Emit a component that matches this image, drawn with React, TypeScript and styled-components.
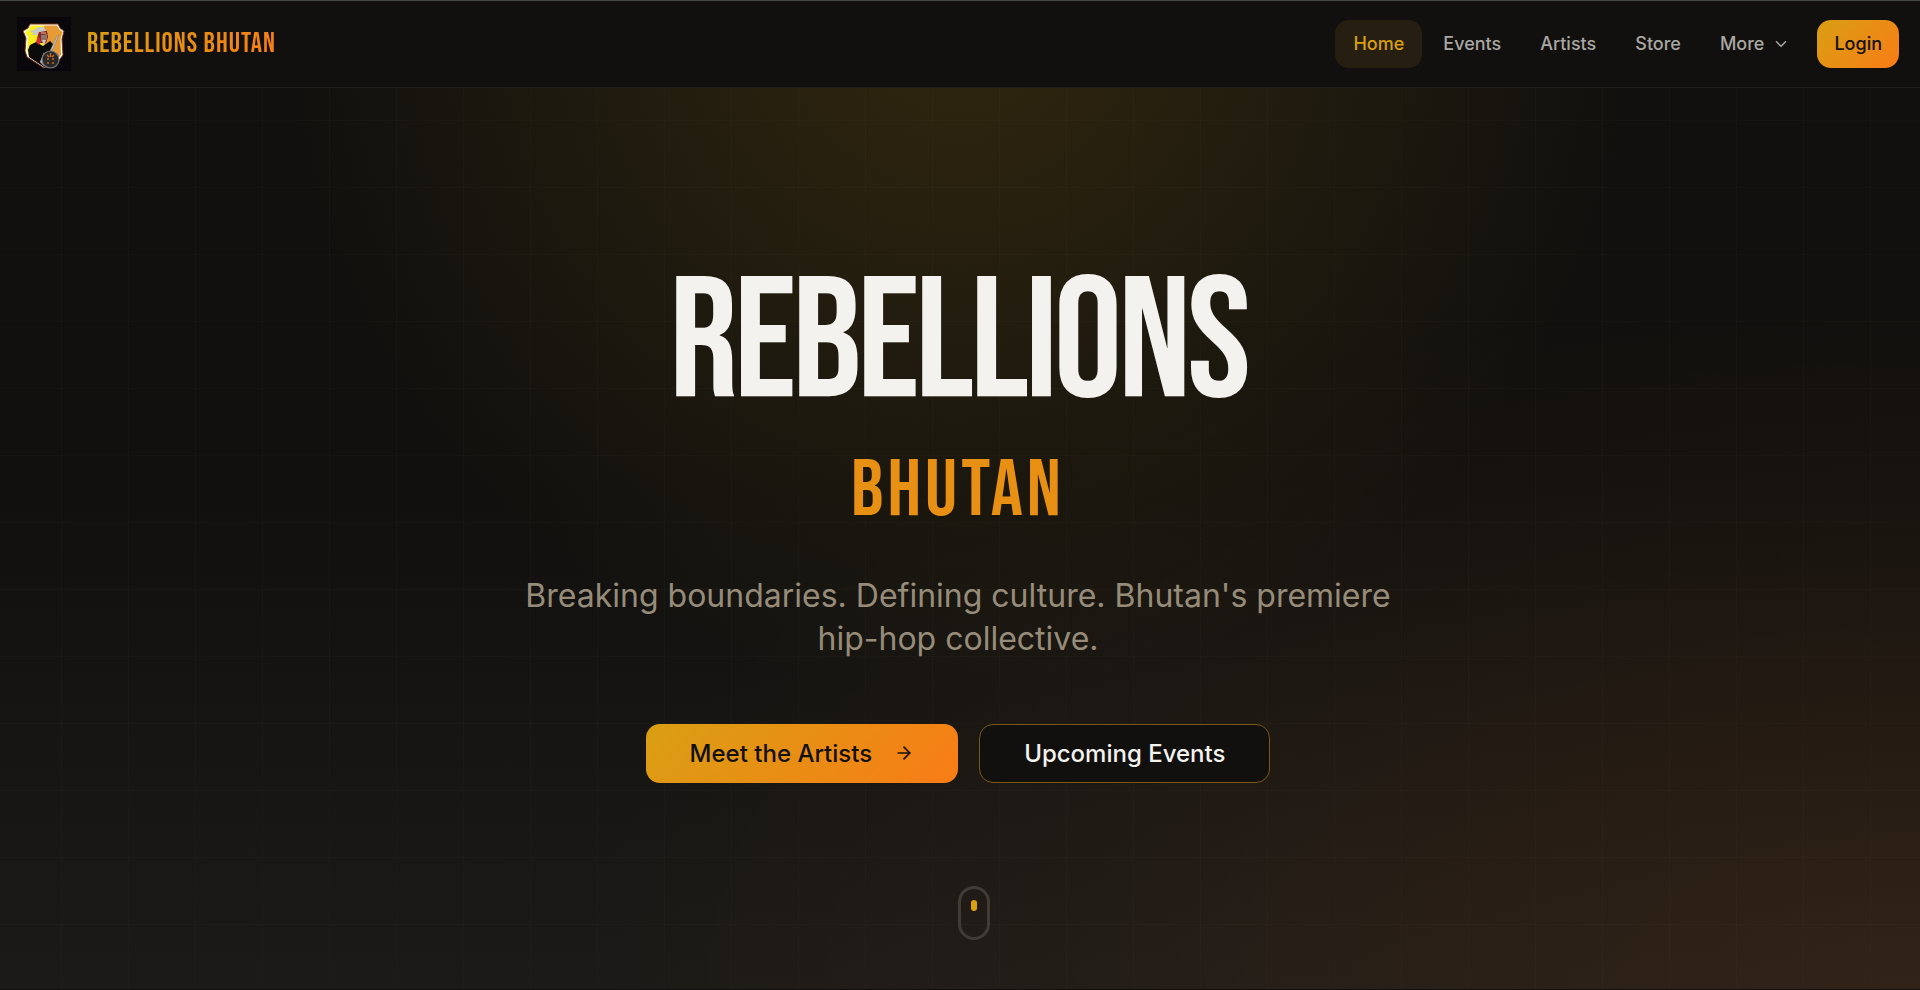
import React from "react";
import styled, { createGlobalStyle, css } from "styled-components";
import { ArrowRight, ChevronDown } from "lucide-react";

const color = {
  ink: "#11100e",
  gold: "#d99f13",
  text: "#f4f2ee",
  muted: "#968c79",
  nav: "#a9a7a3",
};
const brandGradient = "linear-gradient(135deg, #d99f13, #f97c16)";
const display = `"Bebas Neue", "Liberation Sans Narrow", "Liberation Sans", sans-serif`;

const GlobalStyle = createGlobalStyle`
  * { box-sizing: border-box; }
  body {
    margin: 0;
    background: ${color.ink};
    color: ${color.text};
    font-family: Inter, "Liberation Sans", sans-serif;
  }
  h1, p { margin: 0; }
`;

const Page = styled.div`
  min-height: 100vh;
  display: flex;
  flex-direction: column;
  border-bottom: 1px solid ${color.ink};
  background:
    linear-gradient(to right, rgba(217, 180, 120, 0.025) 1px, transparent 1px) 61px 0 / 67px 67px,
    linear-gradient(to bottom, rgba(217, 180, 120, 0.025) 1px, transparent 1px) 0 53px / 67px 67px,
    radial-gradient(ellipse at bottom right, rgba(249, 115, 22, 0.1), transparent 50%),
    radial-gradient(ellipse at top, rgba(217, 159, 19, 0.16), transparent 50%),
    linear-gradient(to bottom, ${color.ink} 50%, #1b1a18);
`;

const Header = styled.header`
  height: 88px;
  display: flex;
  align-items: center;
  justify-content: space-between;
  padding: 0 21px 0 17px;
  background: ${color.ink};
  border-top: 1px solid #434a46;
  border-bottom: 1px solid #21201e;
`;

const Brand = styled.a`
  display: flex;
  align-items: center;
  gap: 16px;
  text-decoration: none;
`;

const BrandName = styled.span`
  font: 400 28px/32px ${display};
  letter-spacing: 1px;
  background: ${brandGradient};
  background-clip: text;
  color: transparent;
`;

const Nav = styled.nav`
  display: flex;
  align-items: center;
  gap: 3px;
`;

const navItem = css`
  display: flex;
  align-items: center;
  height: 48px;
  padding: 0 18px;
  border: 0;
  border-radius: 14px;
  font: 500 18px/24px Inter, sans-serif;
  text-decoration: none;
  cursor: pointer;
`;

const NavLink = styled.a<{ $active?: boolean }>`
  ${navItem}
  color: ${(p) => (p.$active ? color.gold : color.nav)};
  background: ${(p) => (p.$active ? "#261e11" : "transparent")};
`;

const MoreButton = styled.button`
  ${navItem}
  gap: 8px;
  padding-right: 16px;
  color: ${color.nav};
  background: transparent;
`;

const LoginLink = styled.a`
  ${navItem}
  margin-left: 8px;
  padding: 0 17px;
  color: ${color.ink};
  background: ${brandGradient};
`;

const Hero = styled.main`
  flex: 1;
  display: flex;
  flex-direction: column;
  align-items: center;
  padding: 64px 4px 49px 0;
`;

const Intro = styled.section`
  flex: 1;
  display: flex;
  flex-direction: column;
  align-items: center;
  justify-content: center;
  text-align: center;
`;

const Title = styled.h1`
  display: flex;
  flex-direction: column;
  align-items: center;
  gap: 14px;
  font-family: ${display};
  font-weight: 400;
`;

const TitleMain = styled.span`
  font-size: 171px;
  line-height: 177px;
  letter-spacing: -4px;
`;

const TitlePlace = styled.span`
  font-size: 80px;
  line-height: 89px;
  letter-spacing: 4px;
  color: #e79014;
`;

const Tagline = styled.p`
  max-width: 934px;
  margin: 38px 0 64px;
  font-size: 32px;
  line-height: 43px;
  color: ${color.muted};
`;

const Actions = styled.div`
  display: flex;
  gap: 21px;
`;

const Action = styled.a<{ $primary?: boolean }>`
  display: flex;
  align-items: center;
  gap: 22px;
  height: 59px;
  padding: 0 44px;
  border-radius: 14px;
  border: ${(p) => (p.$primary ? "0" : "1px solid #7a5717")};
  font-size: 24px;
  font-weight: 500;
  text-decoration: none;
  color: ${(p) => (p.$primary ? color.ink : color.text)};
  background: ${(p) => (p.$primary ? brandGradient : color.ink)};
`;

const ScrollCue = styled.div`
  padding-left: 32px;
`;

const Mouse = styled.div`
  width: 32px;
  height: 54px;
  display: flex;
  justify-content: center;
  padding-top: 11px;
  border: 3px solid #403c35;
  border-radius: 16px;
`;

const Wheel = styled.span`
  width: 6px;
  height: 11px;
  border-radius: 3px;
  background: ${color.gold};
`;

function Crest() {
  return (
    <svg width="54" height="54" viewBox="0 0 54 54" role="img" aria-label="Rebellions Bhutan crest">
      <rect width="54" height="54" fill="#09070b" />
      <path d="M13 7H41L43 11 47 14 45 22 46 38 41 45 27 51 10 40 8 34 9 21 6 14 11 11Z" fill="#fff" stroke="#7b2e14" strokeWidth="1" />
      <path d="M14 8.500H27V49L11.500 39 10 33 11 20 8 15 12 12Z" fill="#f8ee22" />
      <path d="M27 8.500H40L42 12 45.500 15 43.500 22 44 38 39 44 27 49Z" fill="#e79b34" />
      <path d="M19 25 26 29 33 24 36 27 35 35 32 49 27 50 12 40 11 33 13 28Z" fill="#0c0b0c" />
      <path d="M21 18 23 14 30 14 31 20 29 26 24 26 20 25Z" fill="#7d2724" />
      <path d="M24 18 30 17 30 22 27 26 24 24Z" fill="#8a7468" />
      <path d="M25 23 29 23 28 26 27 28 26 26Z" fill="#c9c6c2" />
      <path d="M19 25 21 18 24 24 22 28Z" fill="#d62c32" />
      <path d="M12 14 17 13 21 10 27 10 29 14 23 15 20 18 14 18 17 16Z" fill="#c9c9c5" />
      <path d="M22 15 30 15 30 17 21 18Z" fill="#912b27" />
      <path d="M24 16H29" stroke="#d5b9a0" />
      <path d="M42 18 35 34 33 34 40 19Z" fill="#c8c7c8" stroke="#77767a" strokeWidth=".5" />
      <path d="M27 35 23 45 27 49 30 47 26 42Z" fill="#c5c4c4" />
      <circle cx="33.500" cy="42.500" r="8.500" fill="#282728" stroke="#77767a" strokeWidth="1.200" />
      <path d="M33.500 36V40M30 38L32 40M37 38L35 40M31 41V43M36 41V43M31 45V47M36 45V47" stroke="#d56c21" strokeWidth="1.400" />
    </svg>
  );
}

export default function App() {
  return (
    <>
      <GlobalStyle />
      <Page>
        <Header>
          <Brand href="#home">
            <Crest />
            <BrandName>REBELLIONS BHUTAN</BrandName>
          </Brand>
          <Nav aria-label="Main">
            <NavLink href="#home" $active aria-current="page">Home</NavLink>
            <NavLink href="#events">Events</NavLink>
            <NavLink href="#artists">Artists</NavLink>
            <NavLink href="#store">Store</NavLink>
            <MoreButton type="button" aria-haspopup="menu">
              More
              <ChevronDown size={18} strokeWidth={2} aria-hidden />
            </MoreButton>
            <LoginLink href="#login">Login</LoginLink>
          </Nav>
        </Header>
        <Hero>
          <Intro>
            <Title>
              <TitleMain>REBELLIONS</TitleMain>
              <TitlePlace>BHUTAN</TitlePlace>
            </Title>
            <Tagline>
              Breaking boundaries. Defining culture. Bhutan's premiere hip-hop collective.
            </Tagline>
            <Actions>
              <Action href="#artists" $primary>
                Meet the Artists
                <ArrowRight size={20} strokeWidth={2} aria-hidden />
              </Action>
              <Action href="#events">Upcoming Events</Action>
            </Actions>
          </Intro>
          <ScrollCue aria-hidden>
            <Mouse>
              <Wheel />
            </Mouse>
          </ScrollCue>
        </Hero>
      </Page>
    </>
  );
}
